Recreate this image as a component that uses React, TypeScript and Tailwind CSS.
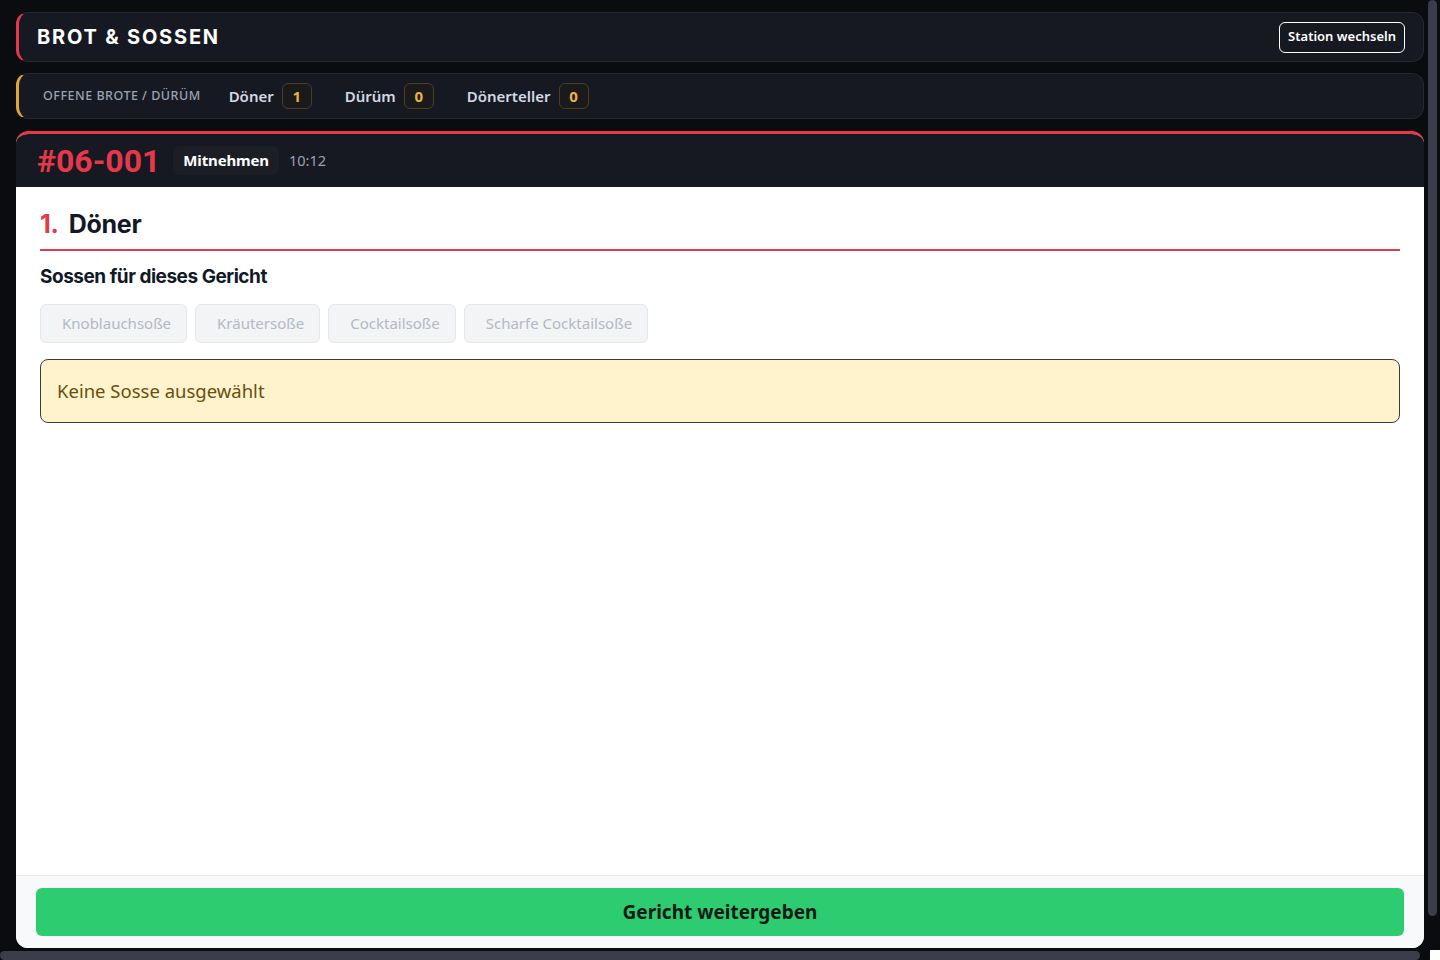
const sauces = ['Knoblauchsoße', 'Kräutersoße', 'Cocktailsoße', 'Scharfe Cocktailsoße']

const counts = [
    { name: 'Döner', count: 1 },
    { name: 'Dürüm', count: 0 },
    { name: 'Dönerteller', count: 0 },
]

export default function App() {
    return (
        <div className="relative h-[960px] w-[1440px] overflow-hidden bg-[#0b0c10] font-['Noto_Sans',sans-serif]">
            <div className="flex h-[950px] w-[1440px] flex-col gap-[11px] pl-4 pr-4 pt-3 pb-[2px]">
                {/* header */}
                <div className="flex h-[50px] items-center justify-between rounded-xl border border-l-[3px] border-[#252932] border-l-[#e5384a] bg-[#161921] pl-[18px] pr-[18px]">
                    <h1 className="font-['Inter',sans-serif] text-[20px] font-bold tracking-[0.09em] text-white">
                        BROT &amp; SOSSEN
                    </h1>
                    <button className="h-[31px] rounded-md border border-white px-2 text-[13px] font-semibold text-white">
                        Station wechseln
                    </button>
                </div>

                {/* offene brote */}
                <div className="flex h-[46px] items-center rounded-xl border border-l-[3px] border-[#252932] border-l-[#e3a72f] bg-[#161921] pl-6">
                    <span className="mr-7 pt-px text-[12.5px] font-medium tracking-[0.04em] text-[#9aa3b5]">
                        OFFENE BROTE / DÜRÜM
                    </span>
                    <div className="flex items-center gap-[33px]">
                        {counts.map((c) => (
                            <div key={c.name} className="flex items-center gap-2">
                                <span className="pt-px text-[15px] font-semibold text-[#d3d9e3]">{c.name}</span>
                                <span className="flex h-[26px] w-[30px] items-center justify-center rounded-md border border-[#4a3f25] bg-[#1a1a1b] text-[15px] leading-none font-bold text-[#ebb04a]">
                                    {c.count}
                                </span>
                            </div>
                        ))}
                    </div>
                </div>

                {/* order card */}
                <div className="mt-px flex flex-1 flex-col overflow-hidden rounded-xl border-t-[3px] border-[#e5384a] bg-white">
                    <div className="flex h-[53px] items-center bg-[#161921] pl-[21px]">
                        <span className="font-['Roboto',sans-serif] text-[32px] font-bold text-[#e5384a]">
                            #06-001
                        </span>
                        <span className="ml-[13px] rounded-md bg-[#1b1e25] px-[10px] py-[3px] text-[15px] font-bold tracking-[-0.01em] text-white">
                            Mitnehmen
                        </span>
                        <span className="ml-[10px] text-[14.5px] text-[#9aa3b5]">10:12</span>
                    </div>

                    <div className="flex-1 px-6 pt-[19px]">
                        <div className="flex items-baseline gap-[10px] border-b-2 border-[#e5384a] pb-[5px] font-['Inter',sans-serif] text-[25px] font-bold tracking-[-0.01em]">
                            <span className="text-[#e5384a]">1.</span>
                            <span className="text-[#111827]">Döner</span>
                        </div>
                        <h2 className="mt-[12px] font-['Inter',sans-serif] text-[19px] font-bold tracking-[-0.025em] text-[#111827]">
                            Sossen für dieses Gericht
                        </h2>
                        <div className="mt-[13px] flex gap-2">
                            {sauces.map((s) => (
                                <span
                                    key={s}
                                    className="flex h-[39px] items-center rounded-md border border-[#e5e7eb] bg-[#f3f4f6] pr-[15px] pl-[21px] text-[15px] text-[#b4b9c3]"
                                >
                                    {s}
                                </span>
                            ))}
                        </div>
                        <div className="mt-4 flex h-[64px] items-center rounded-lg border border-[#3b3b3b] bg-[#fff3cd] pl-4 text-[18.5px] text-[#6b4f0e]">
                            Keine Sosse ausgewählt
                        </div>
                    </div>

                    <div className="border-t border-[#e5e7eb] bg-[#f8f9fb] px-5 pt-3 pb-3">
                        <button className="h-[48px] w-full rounded-md bg-[#2ecc71] text-[19px] font-bold text-[#0f1a14]">
                            Gericht weitergeben
                        </button>
                    </div>
                </div>
            </div>

            {/* scrollbars */}
            <div className="absolute top-0 right-0 h-[950px] w-[15px] bg-[#0b0c10]">
                <div className="mx-auto h-[916px] w-[9px] rounded-full bg-[#3b3e4a]" />
            </div>
            <div className="absolute bottom-0 left-0 h-[10px] w-[1430px] bg-[#0b0c10]">
                <div className="mt-[1px] h-[9px] w-[1420px] rounded-full bg-[#3b3e4a]" />
            </div>
            <div className="absolute right-0 bottom-0 h-[10px] w-[10px] bg-white" />
        </div>
    )
}
